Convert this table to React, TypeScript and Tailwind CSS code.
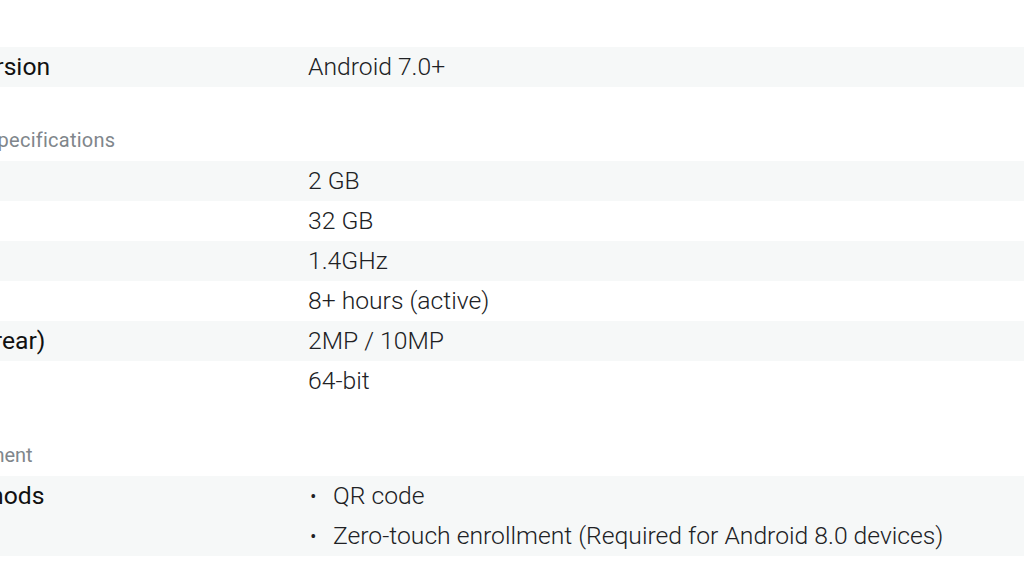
const font = { fontFamily: "Roboto, 'Noto Sans', sans-serif" };

type Row = { label: string; value: string | string[] };

function SpecRow({ row, shaded }: { row: Row; shaded: boolean }) {
  const list = Array.isArray(row.value);
  const values = list ? (row.value as string[]) : [row.value as string];
  return (
    <div className={`flex ${shaded ? "bg-[#f6f8f8]" : "bg-white"}`}>
      <div className="w-[477px] shrink-0 h-10 flex items-center text-[24.7px] text-[#111] whitespace-nowrap">
        {row.label}
      </div>
      <div className="flex-1">
        {values.map((v) => (
          <div key={v} className="h-10 flex items-center text-[24.7px] font-light text-[#202124] whitespace-nowrap">
            {list && <span className="w-[25px] pl-[2px] text-[20px]">•</span>}
            {v}
          </div>
        ))}
      </div>
    </div>
  );
}

function SectionTitle({ children, className }: { children: string; className: string }) {
  return (
    <h3 className={`${className} text-[20px] leading-[28px] text-[#80868b] whitespace-nowrap`}>
      {children}
    </h3>
  );
}

const hardware: Row[] = [
  { label: "RAM", value: "2 GB" },
  { label: "Storage", value: "32 GB" },
  { label: "Processor", value: "1.4GHz" },
  { label: "Battery", value: "8+ hours (active)" },
  { label: "Camera (front/rear)", value: "2MP / 10MP" },
  { label: "Architecture", value: "64-bit" },
];

export default function App() {
  return (
    <div className="w-[1024px] h-[576px] overflow-hidden bg-white" style={font}>
      {/* page is scrolled sideways: the label column starts off screen */}
      <div className="ml-[-169px] w-[1300px] pt-[47px]">
        <SpecRow row={{ label: "Shipping OS version", value: "Android 7.0+" }} shaded />
        <SectionTitle className="pt-[39px] mb-[7px] tracking-[0.25px]">Device hardware specifications</SectionTitle>
        {hardware.map((r, i) => (
          <SpecRow key={r.label} row={r} shaded={i % 2 === 0} />
        ))}
        <SectionTitle className="pt-[40px] mb-[7px]">Endpoint management</SectionTitle>
        <SpecRow
          row={{
            label: "Activation methods",
            value: ["QR code", "Zero-touch enrollment (Required for Android 8.0 devices)"],
          }}
          shaded
        />
      </div>
    </div>
  );
}
